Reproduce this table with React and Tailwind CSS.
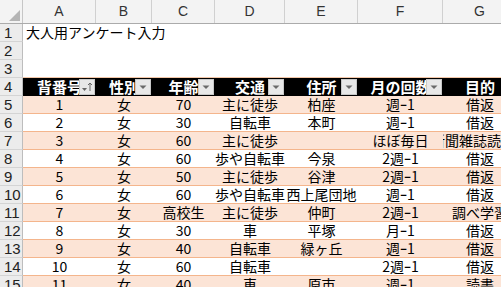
import React from "react";

const cols = ["A", "B", "C", "D", "E", "F", "G"];
const widths = ["w-[73px]", "w-[56px]", "w-[63px]", "w-[70px]", "w-[73px]", "w-[85px]", "w-[74px]"];
const heads = ["背番号", "性別", "年齢", "交通", "住所", "月の回数", "目的"];

const rows = [
  ["1", "女", "70", "主に徒歩", "柏座", "週ｰ1", "借返"],
  ["2", "女", "30", "自転車", "本町", "週ｰ1", "借返"],
  ["3", "女", "60", "主に徒歩", "", "ほぼ毎日", "新聞雑誌読みに"],
  ["4", "女", "60", "歩や自転車", "今泉", "2週ｰ1", "借返"],
  ["5", "女", "50", "主に徒歩", "谷津", "2週ｰ1", "借返"],
  ["6", "女", "60", "歩や自転車", "西上尾団地", "週ｰ1", "借返"],
  ["7", "女", "高校生", "主に徒歩", "仲町", "2週ｰ1", "調べ学習"],
  ["8", "女", "30", "車", "平塚", "月ｰ1", "借返"],
  ["9", "女", "40", "自転車", "緑ヶ丘", "週ｰ1", "借返"],
  ["10", "女", "60", "自転車", "", "2週ｰ1", "借返"],
  ["11", "女", "40", "車", "原市", "週ｰ1", "読書"],
];

const font = { fontFamily: '"Noto Sans CJK JP", sans-serif' };

function RowNum({ n }) {
  return (
    <div className="w-[23px] shrink-0 h-full bg-[#ececec] border-r border-b border-r-[#bdbdbd] border-b-[#d4d4d4] pl-[4px] text-[15px] leading-[17px] text-[#222] font-['Liberation_Sans',sans-serif]">
      {n}
    </div>
  );
}

function FilterButton({ sorted }) {
  return (
    <div className="absolute right-[1px] top-[1px] w-[16px] h-[16px] bg-[#e8e8e8] border border-[#c8c8c8] flex items-center justify-center">
      {sorted ? (
        <svg width="14" height="12" viewBox="0 0 14 12">
          <path d="M2 7 L7 7 L4.5 10 Z" fill="#666" />
          <path d="M10 10 L10 2 M8 4 L10 2 L12 4" stroke="#666" strokeWidth="1" fill="none" />
        </svg>
      ) : (
        <svg width="10" height="8" viewBox="0 0 10 8">
          <path d="M1.5 2.5 L8.5 2.5 L5 6 Z" fill="#6a6a6a" />
        </svg>
      )}
    </div>
  );
}

export default function App() {
  return (
    <div className="w-[501px] h-[287px] overflow-hidden bg-white" style={font}>
      {/* column letters */}
      <div className="flex h-[24px] bg-[#f3f3f3] border-b border-[#ababab]">
        <div className="w-[23px] shrink-0 relative border-r border-[#c6c6c6]">
          <svg className="absolute right-[2px] bottom-[2px]" width="11" height="11" viewBox="0 0 11 11">
            <path d="M11 0 L11 11 L0 11 Z" fill="#b4b4b4" />
          </svg>
        </div>
        {cols.map((c, i) => (
          <div
            key={c}
            className={`${widths[i]} shrink-0 flex items-center justify-center border-r border-[#d0d0d0] text-[14px] text-[#333] font-['Liberation_Sans',sans-serif]`}
          >
            {c}
          </div>
        ))}
      </div>

      {/* title rows */}
      <div className="flex h-[18px]">
        <RowNum n="1" />
        <div className="pl-[3px] text-[14px] leading-[17px] whitespace-nowrap text-black">大人用アンケート入力</div>
      </div>
      <div className="flex h-[18px]">
        <RowNum n="2" />
      </div>
      <div className="flex h-[18px]">
        <RowNum n="3" />
        <div className="flex-1 border-b border-[#f4c7a8]" />
      </div>

      {/* table header */}
      <div className="flex h-[18px]">
        <RowNum n="4" />
        {heads.map((h, i) => (
          <div key={h} className={`${widths[i]} shrink-0 relative bg-black overflow-hidden flex justify-center`}>
            <span className="text-white font-bold text-[15px] leading-[18px] whitespace-nowrap">{h}</span>
            {i < 6 && <FilterButton sorted={i === 0} />}
          </div>
        ))}
      </div>

      {/* data rows */}
      {rows.map((r, ri) => (
        <div key={ri} className="flex h-[18px]">
          <RowNum n={String(ri + 5)} />
          {r.map((v, ci) => (
            <div
              key={ci}
              className={`${widths[ci]} shrink-0 h-full flex justify-center whitespace-nowrap text-[14px] leading-[17px] text-black border-b border-[#f4b58c] ${
                ri % 2 === 0 ? "bg-[#fce4d6]" : "bg-white"
              } ${ci === 6 || (ci === 4 && r[5] !== "") ? "overflow-hidden" : "overflow-visible"}`}
            >
              {v}
            </div>
          ))}
        </div>
      ))}
    </div>
  );
}
